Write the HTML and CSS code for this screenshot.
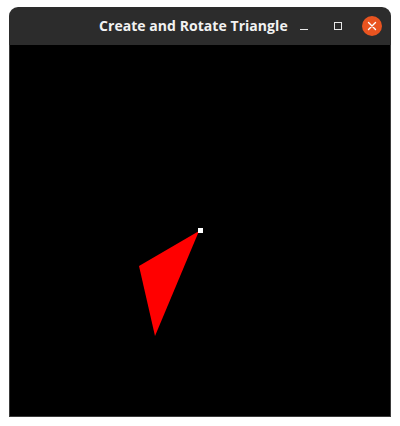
FILE: index.html
```html
<!DOCTYPE html>
<html>
<head>
<meta charset="utf-8">
<link rel="stylesheet" href="styles.css">
</head>
<body>
<div class="window">
  <div class="titlebar">
    <span class="title">Create and Rotate Triangle</span>
    <div class="controls">
      <span class="btn min"></span>
      <span class="btn max"></span>
      <span class="btn close">
        <svg width="20" height="20" viewBox="0 0 20 20"><path d="M6.5 6.5 L13.5 13.5 M13.5 6.5 L6.5 13.5" stroke="#fff" stroke-width="1.4" stroke-linecap="round"/></svg>
      </span>
    </div>
  </div>
  <div class="canvas">
    <svg class="scene" width="380" height="371" viewBox="0 0 380 371">
      <polygon points="189,186 129,221 145,291" fill="#ff0000"/>
      <rect x="188" y="183" width="5" height="5" fill="#ffffff"/>
    </svg>
  </div>
</div>
</body>
</html>
```
FILE: styles.css
```css
html, body {
  margin: 0;
  padding: 0;
  background: #ffffff;
}
body {
  padding: 7px 0 0 9px;
  height: 426px;
  box-sizing: border-box;
  overflow: hidden;
}
.window {
  width: 382px;
  display: flex;
  flex-direction: column;
}
.titlebar {
  height: 38px;
  background: #2c2c2c;
  border-radius: 9px 9px 0 0;
  position: relative;
  display: flex;
  align-items: center;
}
.title {
  position: absolute;
  left: 90px;
  top: 10px;
  color: #f2f2f2;
  font-family: "Open Sans", "DejaVu Sans", sans-serif;
  font-weight: 700;
  font-size: 14px;
  line-height: 18px;
  letter-spacing: 0.05px;
}
.controls {
  margin-left: auto;
  display: flex;
  align-items: center;
  padding-right: 9px;
}
.btn {
  display: flex;
  align-items: center;
  justify-content: center;
}
.min {
  width: 8px;
  height: 1px;
  background: #e8e8e8;
  margin-top: 6px;
  margin-right: 26px;
}
.max {
  width: 6px;
  height: 6px;
  border: 1px solid #e8e8e8;
  margin-right: 20px;
}
.close {
  width: 20px;
  height: 20px;
  border-radius: 50%;
  background: #e95420;
}
.canvas {
  background: #000000;
  border: 1px solid #3a3a3a;
  border-top: none;
  box-sizing: border-box;
  height: 372px;
}
.scene {
  display: block;
}
```
